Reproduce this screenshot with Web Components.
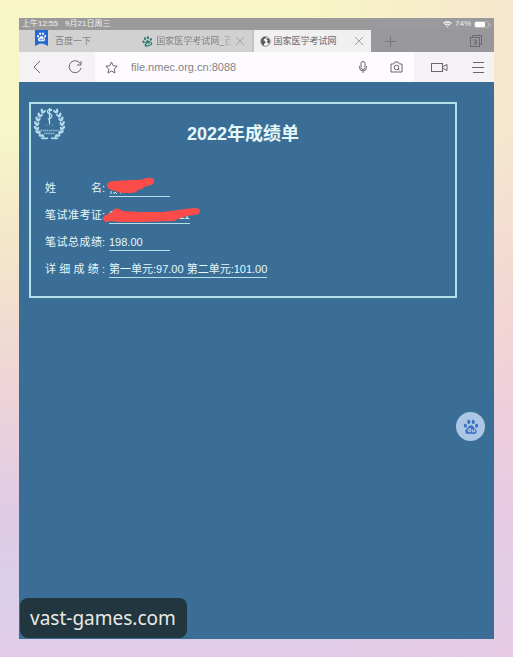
<!DOCTYPE html>
<html lang="zh-CN">
<head>
<meta charset="utf-8">
<meta name="viewport" content="width=device-width, initial-scale=1">
<title>2022年成绩单</title>
<style>
  body {
    margin: 0;
    min-height: 100vh;
    box-sizing: border-box;
    padding: 18px 19px;
    display: flex;
    font-family: "Liberation Sans", "Noto Sans CJK SC", sans-serif;
    background:
      linear-gradient(90deg, rgba(244, 200, 220, 0) 60%, rgba(244, 200, 220, .35)),
      linear-gradient(180deg, #f8f6c6 0%, #f6f6c8 20%, #f3e2cc 42%, #eed3d8 60%, #e0cbe5 78%, #d9cfea 90%, #e2cbe9 100%);
  }
</style>
</head>
<body>
<tablet-screen>
  <status-bar slot="top"></status-bar>
  <tab-strip slot="top">
    <browser-tab icon="ribbon">百度一下</browser-tab>
    <browser-tab icon="paw" closable>国家医学考试网_百度</browser-tab>
    <browser-tab icon="globe" closable active>国家医学考试网</browser-tab>
  </tab-strip>
  <address-bar slot="top" url="file.nmec.org.cn:8088"></address-bar>

  <score-card>
    <span slot="title">2022年成绩单</span>
    <score-row label="姓 名:" mark="name"></score-row>
    <score-row label="笔 试 准 考 证:" mark="ticket"><span>0</span><span>711</span></score-row>
    <score-row label="笔 试 总 成 绩:">198.00</score-row>
    <score-row label="详 细 成 绩 :">第一单元:97.00 第二单元:101.00</score-row>
  </score-card>

  <assist-button slot="float"></assist-button>
  <site-badge slot="float">vast-games.com</site-badge>
</tablet-screen>

<script>
const paw = (fill, extra = '') => `
  <g fill="${fill}">
    <ellipse cx="3" cy="8.4" rx="1.9" ry="2.5" transform="rotate(-15 3 8.4)"/>
    <ellipse cx="7.2" cy="3.7" rx="1.9" ry="2.7"/>
    <ellipse cx="12.8" cy="3.7" rx="1.9" ry="2.7"/>
    <ellipse cx="17" cy="8.4" rx="1.9" ry="2.5" transform="rotate(15 17 8.4)"/>
    <path d="M10 7.8c2.4 0 3 2.2 4.6 3.7 1.8 1.6 2.8 2.8 2.4 4.6-.5 2.3-2.5 2.7-4 2.5-1.7-.2-4.3-.2-6 0-1.5.2-3.5-.2-4-2.5-.4-1.8.6-3 2.4-4.6C7 10 7.6 7.8 10 7.8z"/>
  </g>${extra}`;

const icons = {
  ribbon: `<svg width="13" height="16" viewBox="0 0 26 32"><path fill="#2468d0" d="M0 0h26v32l-6-3q-7-4-14 0l-6 3z"/><g transform="translate(3 4)">${paw('#fff', '<path d="M7 13v3h2v-3M11 13v3h3v-3" fill="none" stroke="#2468d0" stroke-width="1.2"/>')}</g></svg>`,
  paw: `<svg width="11" height="11" viewBox="0 0 20 20"><g transform="rotate(-18 10 10)">${paw('#2a7a70', '<path d="M7 13v3h2v-3M11 13v3h3v-3" fill="none" stroke="#d3efe9" stroke-width="1.4"/>')}</g></svg>`,
  globe: `<svg width="11" height="11" viewBox="0 0 22 22"><circle cx="11" cy="11" r="9.5" fill="#f4f4f4" stroke="#666" stroke-width="1.5"/><path fill="#555" d="M3 6c3-4 7-5 9-4l-1 3-3 1-1 3 3 1 1 3-3 3-1 4C3 16 1 11 3 6zM14 4l4 2 2 5-2 4-3-1-1-3 2-2-3-2z"/></svg>`,
  close: `<svg width="10" height="10" viewBox="0 0 10 10"><path d="M1 1l8 8M9 1L1 9" stroke="#a3a3a3" fill="none"/></svg>`
};

// Small helper so every element builds its shadow root the same way
class BaseElement extends HTMLElement {
  connectedCallback() {
    if (this.shadowRoot) return;
    this.attachShadow({ mode: 'open' });
    this.shadowRoot.innerHTML = this.render();
  }
}

class TabletScreen extends BaseElement {
  render() {
    return `
      <style>
        :host { flex: 1; min-width: 0; display: flex; flex-direction: column; }
        main {
          flex: 1;
          position: relative;
          padding: 20px 37px 20px 10px;
          background: #3a6e96;
        }
      </style>
      <slot name="top"></slot>
      <main><slot></slot><slot name="float"></slot></main>
    `;
  }
}

class StatusBar extends BaseElement {
  render() {
    return `
      <style>
        :host {
          display: flex;
          align-items: center;
          gap: 7px;
          height: 12px;
          padding: 0 3px;
          background: #9a999b;
          color: #f2f2f2;
          font-size: 8px;
          line-height: 12px;
          white-space: nowrap;
        }
        .right { margin-left: auto; display: flex; align-items: center; gap: 3px; }
        svg { display: block; }
      </style>
      <span>上午12:55</span>
      <span>9月21日周三</span>
      <span class="right">
        <svg width="9" height="7" viewBox="0 0 18 14" fill="none" stroke="#f2f2f2" stroke-width="2.5"><path d="M1 5q8-7 16 0M4 8.5q5-4.5 10 0"/><path d="M6.5 10.5h5L9 13.5z" fill="#f2f2f2" stroke="none"/></svg>
        <span>74%</span>
        <svg width="17" height="7" viewBox="0 0 17 7"><rect x=".5" y=".5" width="14" height="6" rx="1.5" fill="none" stroke="#b5b5b5"/><rect x="1" y="1" width="10" height="5" rx="1" fill="#fff"/><path d="M16 2.5v2" stroke="#c5c5c5"/></svg>
      </span>
    `;
  }
}

class TabStrip extends BaseElement {
  render() {
    return `
      <style>
        :host {
          display: grid;
          grid-template-columns: repeat(3, minmax(0, 20fr)) 21fr;
          height: 22px;
          background: #98979b;
        }
        .tools {
          display: flex;
          justify-content: space-between;
          align-items: center;
          padding: 0 11px 0 12px;
        }
        button { display: flex; padding: 0; border: 0; background: none; }
      </style>
      <slot></slot>
      <div class="tools">
        <button aria-label="新建标签页"><svg width="14" height="14" viewBox="0 0 14 14"><path d="M7.5 2v11M2 7.5h11" stroke="#77767a" fill="none"/></svg></button>
        <button aria-label="全部标签页"><svg width="14" height="14" viewBox="0 0 14 14" fill="none" stroke="#6b6a6e"><path d="M3.5 3V1.5h9v9H11"/><rect x="1.5" y="3.5" width="9" height="9"/><path d="M4.5 6h3v4h-3M5 8h2.5"/></svg></button>
      </div>
    `;
  }
}

class BrowserTab extends BaseElement {
  render() {
    const close = this.hasAttribute('closable')
      ? `<button aria-label="关闭标签页">${icons.close}</button>` : '';
    return `
      <style>
        :host {
          display: flex;
          align-items: center;
          gap: 3px;
          padding: 0 7px 0 6px;
          background: #d2d1d2;
          color: #828184;
          font-size: 9px;
          line-height: 22px;
        }
        :host([icon="ribbon"]) { gap: 7px; padding-left: 16px; }
        :host([icon="ribbon"]) svg { align-self: flex-start; }
        :host([icon="paw"]) { border-right: 2px solid #c4c3c5; }
        :host([active]) { background: #f1f0f1; color: #69686b; }
        svg { display: block; flex: none; }
        .name {
          flex: 1;
          min-width: 0;
          overflow: hidden;
          white-space: nowrap;
        }
        :host([icon="paw"]) .name {
          -webkit-mask-image: linear-gradient(90deg, #000 88%, transparent);
          mask-image: linear-gradient(90deg, #000 88%, transparent);
        }
        button { padding: 0; border: 0; background: none; }
      </style>
      ${icons[this.getAttribute('icon')]}
      <span class="name"><slot></slot></span>
      ${close}
    `;
  }
}

class AddressBar extends BaseElement {
  render() {
    return `
      <style>
        :host {
          display: flex;
          height: 30px;
          padding-right: 3px;
          background: #f4f2f5;
        }
        button {
          display: flex;
          align-items: center;
          justify-content: center;
          flex: none;
          width: 36px;
          padding: 0;
          border: 0;
          background: none;
        }
        .reload { width: 40px; }
        .small { width: 32px; }
        .mic { width: 30px; }
        .video { width: 50px; }
        .menu { width: 27px; }
        .field { flex: 1; display: flex; min-width: 0; background: #fdfbfe; }
        input {
          flex: 1;
          min-width: 0;
          padding: 0 4px;
          border: 0;
          outline: 0;
          background: none;
          color: #858387;
          font: 11px "Liberation Sans", sans-serif;
        }
        svg { display: block; fill: none; stroke: #68666a; }
      </style>
      <button aria-label="后退"><svg width="8" height="14" viewBox="0 0 8 14"><path d="M7 1L1 7l6 6"/></svg></button>
      <button class="reload" aria-label="刷新"><svg width="14" height="14" viewBox="0 0 14 14"><path d="M12.5 4A6 6 0 1 0 13 8M13 1v4H9"/></svg></button>
      <div class="field">
        <button class="small" aria-label="收藏"><svg width="13" height="13" viewBox="0 0 13 13"><path d="M6.5 1l1.7 3.7 4 .5-3 2.8.8 4-3.500-2-3.500 2 .8-4-3-2.800 4-.5z"/></svg></button>
        <input type="text" aria-label="网址" value="${this.getAttribute('url')}">
        <button class="mic" aria-label="语音"><svg width="10" height="12" viewBox="0 0 10 12"><rect x="3" y=".5" width="4" height="8" rx="2"/><path d="M1.500 5v1.500a3.500 3.500 0 0 0 7 0V5M5 10v2"/></svg></button>
        <button aria-label="拍照"><svg width="13" height="12" viewBox="0 0 13 12"><path d="M1 3h2.500L5 1h3l1.500 2H12v8H1z"/><circle cx="6.500" cy="6.500" r="2.300"/><path d="M8 8l1.500 1"/></svg></button>
      </div>
      <button class="video" aria-label="视频"><svg width="17" height="11" viewBox="0 0 17 11"><rect x=".5" y="1.5" width="11" height="8"/><path d="M12 4.5l4-2v6l-4-2"/></svg></button>
      <button class="menu" aria-label="菜单"><svg width="12" height="13" viewBox="0 0 12 13"><path d="M1 1.500h11M0 6.500h12M1 11.500h11"/></svg></button>
    `;
  }
}

class ScoreCard extends BaseElement {
  // One laurel branch, mirrored for the other side
  branch() {
    const leaves = [[9, 4, 20], [6, 8, 15], [4, 12, 5], [2.8, 16.5, 0], [2.8, 21, -15], [4.5, 25, -35], [8, 28.5, -60]];
    return leaves.map(([x, y, a]) => `
      <ellipse cx="${x}" cy="${y}" rx="1.3" ry="2.6" transform="rotate(${a - 28} ${x} ${y})"/>
      <ellipse cx="${x + 2.2}" cy="${y + .6}" rx="1" ry="2.2" transform="rotate(${a + 32} ${x + 2.2} ${y + .6})"/>`).join('');
  }

  render() {
    return `
      <style>
        :host {
          display: block;
          padding: 3px 2px 18px;
          border: 2px solid #b3e0e9;
          color: #e4f8fa;
        }
        header {
          display: grid;
          grid-template-columns: 34px 1fr 34px;
          height: 39px;
        }
        h1 {
          align-self: end;
          margin: 0;
          font-size: 18px;
          line-height: 24px;
          text-align: center;
        }
        dl {
          display: flex;
          flex-direction: column;
          gap: 10px;
          margin: 34px 0 0;
          padding-left: 12px;
        }
      </style>
      <header>
        <svg width="33" height="34" viewBox="0 0 33 34" fill="#b5dcee" aria-hidden="true">
          <g>${this.branch()}</g>
          <g transform="translate(33 0) scale(-1 1)">${this.branch()}</g>
          <path d="M8 31q4 1 7 0M18 31q4 1 7 0" fill="none" stroke="#b5dcee" stroke-width="1.5"/>
          <path d="M16.5 1v16M18.500 3q-4-1-4 1.500t3 2.500q2 1 1 3t-3 2q1 2 1.500 3" fill="none" stroke="#bfe3f2" stroke-width="1.2"/>
          <circle cx="18" cy="3" r="1.2"/>
          <path d="M13 18h1M16 18h1M19 18h1" stroke="#8fc0da"/>
          <path d="M7.5 23.5h18M11 26.5h11" stroke="#8fc0da" stroke-width="1.3" stroke-dasharray="1.5 .6"/>
        </svg>
        <h1><slot name="title"></slot></h1>
      </header>
      <dl><slot></slot></dl>
    `;
  }
}

class ScoreRow extends BaseElement {
  render() {
    // Pen strokes that cover the private values
    const marks = {
      name: `<svg width="50" height="19" viewBox="0 0 50 19"><path d="M4 17v-3M7 17v-2M10 17l-2-2M13 16h1" stroke="#d8f2f5" fill="none"/><path fill="#fb4c49" d="M0 8Q1 4 8 4l16-1 8 0 8-2q6-1 7 2t-3 5l-7 2-2 2-4 1-2 2-4 1-11 0-2-1-4-1-3-1q-5-1-5-5z"/></svg>`,
      ticket: `<svg width="97" height="16" viewBox="0 0 97 16"><path fill="#fb4c49" d="M0 11q1-3 5-4l4-2 2-3q2-1 5 0l4 2 16 1 24 0 22-3 9-1q6 0 6 3 0 4-6 4l-7 1-9 3-4 2-33 1-21 0-9-1-5 1q-3-1-3-4z"/></svg>`
    };
    const mark = this.getAttribute('mark');
    const label = this.getAttribute('label').split(' ').map(part => `<span>${part}</span>`).join('');
    return `
      <style>
        :host {
          display: flex;
          gap: 4px;
          font-size: 11px;
          line-height: 16px;
          white-space: nowrap;
        }
        dt { display: flex; justify-content: space-between; width: 60px; }
        dd {
          position: relative;
          display: flex;
          justify-content: space-between;
          box-sizing: border-box;
          min-width: 61px;
          height: 17px;
          margin: 0;
          border-bottom: 1px solid #b3e0e9;
        }
        :host([mark="ticket"]) dd { min-width: 81px; }
        svg { position: absolute; left: -2px; top: -3px; }
        :host([mark="ticket"]) svg { left: -6px; top: 0; }
      </style>
      <dt>${label}</dt>
      <dd><slot></slot>${marks[mark] || ''}</dd>
    `;
  }
}

class AssistButton extends BaseElement {
  render() {
    return `
      <style>
        :host { position: absolute; top: 330px; right: 9px; }
        button {
          display: flex;
          align-items: center;
          justify-content: center;
          width: 29px;
          height: 29px;
          padding: 0;
          border: 0;
          border-radius: 50%;
          background: #acc6e3;
        }
      </style>
      <button aria-label="百度助手"><svg width="16" height="16" viewBox="0 0 20 20">${paw('#3b6fc4', '<path d="M9 12.5H7q-1.5 1.5 0 3.5h2v-5M11.5 12.5V16h3v-3.5" fill="none" stroke="#c9daf0" stroke-width="1.2"/>')}</svg></button>
    `;
  }
}

class SiteBadge extends BaseElement {
  render() {
    return `
      <style>
        :host {
          position: absolute;
          left: 1px;
          bottom: 1px;
          padding: 0 11px 0 10px;
          border-radius: 8px;
          background: #21363e;
          color: #eae9e4;
          font: 19px/40px "Noto Sans", sans-serif;
        }
      </style>
      <slot></slot>
    `;
  }
}

customElements.define('tablet-screen', TabletScreen);
customElements.define('status-bar', StatusBar);
customElements.define('tab-strip', TabStrip);
customElements.define('browser-tab', BrowserTab);
customElements.define('address-bar', AddressBar);
customElements.define('score-card', ScoreCard);
customElements.define('score-row', ScoreRow);
customElements.define('assist-button', AssistButton);
customElements.define('site-badge', SiteBadge);
</script>
</body>
</html>
